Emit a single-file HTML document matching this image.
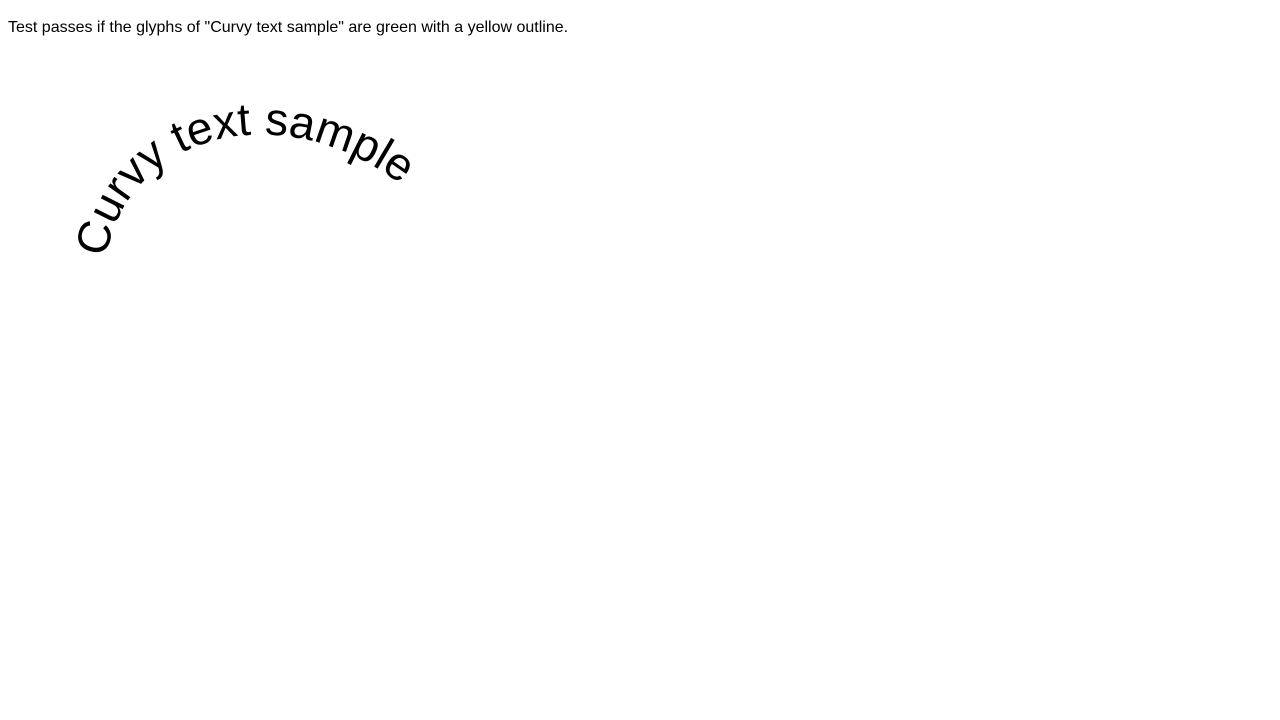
<!DOCTYPE html>
<html><head><style>
html,body{margin:0;padding:0;background:#fff;}
p{position:absolute;left:8px;top:19px;margin:0;font-family:"Liberation Sans",sans-serif;font-size:16px;color:#000;}
svg{position:absolute;left:0;top:0;}
</style></head><body>
<p>Test passes if the glyphs of "Curvy text sample" are green with a yellow outline.</p>
<svg width="1280" height="720">
<path id="p" d="M106,258 C127,128 295,88 420,200" fill="none"/>
<text font-family="Liberation Sans, sans-serif" font-size="46" fill="#000"><textPath href="#p">Curvy text sample</textPath></text>
</svg>
</body></html>
